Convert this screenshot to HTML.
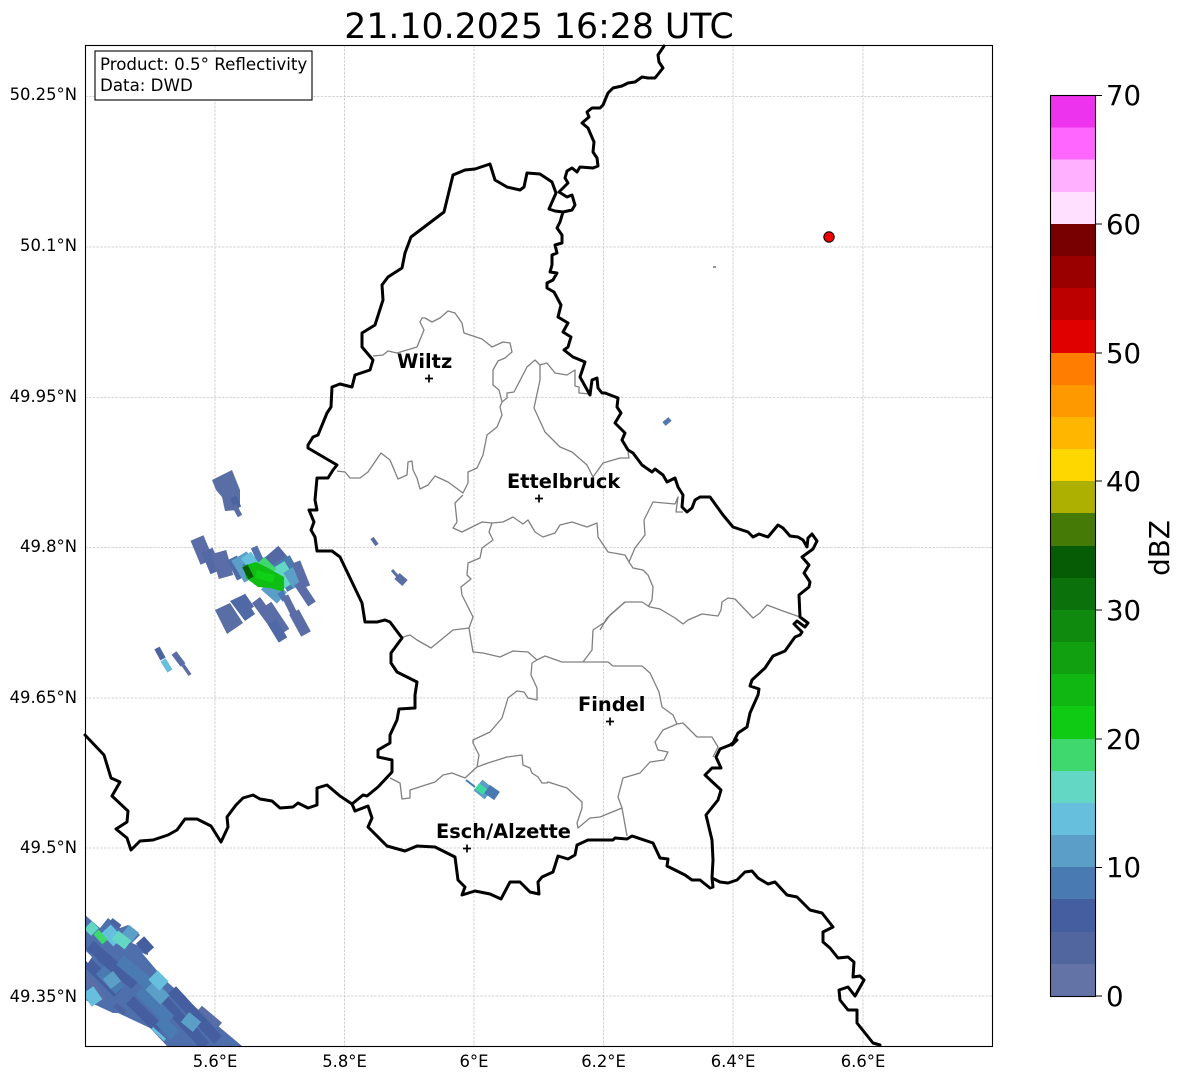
<!DOCTYPE html>
<html><head><meta charset="utf-8"><title>Radar</title>
<style>
html,body{margin:0;padding:0;background:#fff;width:1184px;height:1081px;overflow:hidden}
svg{display:block}
text{font-family:"DejaVu Sans",sans-serif;fill:#000}
.t{font-size:16.4px}
.c{font-size:27.6px}
.b{font-size:19.4px;font-weight:bold}
</style></head><body>
<svg width="1184" height="1081" viewBox="0 0 1184 1081" xmlns="http://www.w3.org/2000/svg">
<defs><clipPath id="f"><rect x="85" y="45" width="907" height="1001"/></clipPath></defs>
<text x="539" y="38" text-anchor="middle" font-size="34.7">21.10.2025 16:28 UTC</text>

<g stroke="#c8c8c8" stroke-width="0.8" stroke-dasharray="2.6 1.2" fill="none">
<path d="M215 45V1046M344.5 45V1046M474 45V1046M603.5 45V1046M733 45V1046M863 45V1046"/>
<path d="M85 96.5H992M85 247H992M85 397.5H992M85 547.5H992M85 698H992M85 848H992M85 996H992"/>
</g>

<!-- radar echoes -->
<g clip-path="url(#f)" fill="none" stroke-linecap="butt">
<!-- top blob -->
<path fill="#5a6ea6" stroke="none" d="M212 480L232 470L240 490L240 503L238 510L225 511L222 497L216 490Z"/>
<path stroke="#4c63a2" stroke-width="7" d="M233 497L238 508"/>
<path stroke="#5a6ea6" stroke-width="5" d="M234 505L240 516"/>
<!-- middle cluster -->
<path stroke="#5b6da6" stroke-width="14" d="M197 538L207 562"/>
<path stroke="#5468a5" stroke-width="12" d="M207 550L216 572"/>
<path stroke="#5b6da6" stroke-width="15" d="M219 552L226 577"/>
<path stroke="#4e6ca8" stroke-width="11" d="M232 558L242 578"/>
<path stroke="#5b9fc8" stroke-width="18" d="M239 556L252 578"/>
<path stroke="#5470ad" stroke-width="7" d="M254 547L262 564"/>
<path stroke="#4a7ab2" stroke-width="18" d="M250 560L262 580"/>
<path stroke="#66c0dd" stroke-width="12" d="M246 555L254 567"/>
<path stroke="#5468a5" stroke-width="22" d="M270 553L288 574"/>
<path stroke="#4a7ab2" stroke-width="20" d="M281 560L296 587"/>
<path stroke="#5b9fc8" stroke-width="15" d="M266 584L282 598"/>
<path stroke="#63d7c4" stroke-width="15" d="M278 565L290 585"/>
<path stroke="#5b9fc8" stroke-width="11" d="M288 570L298 586"/>
<path stroke="#5b6da6" stroke-width="9" d="M296 562L306 587"/>
<path stroke="#5b6da6" stroke-width="9" d="M298 583L312 604"/>
<path stroke="#3ed86e" stroke-width="12" d="M260 561L272 573"/>
<path fill="#0fbe12" stroke="none" d="M243 566L256 562L268 568L284 577L284 592L270 588L258 587L246 578Z"/>
<path stroke="#0fd016" stroke-width="8" d="M256 574L274 579"/>
<path stroke="#056005" stroke-width="6" d="M245 566L251 578"/>
<path stroke="#4a7ab2" stroke-width="6" d="M280 592L285 600"/>
<!-- lower row -->
<path fill="#5a6ea6" stroke="none" d="M215 610L230 603L243 623L227 634Z"/>
<path fill="#4f69a6" stroke="none" d="M230 601L243 595L255 614L245 621Z"/>
<path stroke="#5468a5" stroke-width="5" d="M243 595L252 608"/>
<path stroke="#5b6da6" stroke-width="10" d="M256 600L278 630"/>
<path stroke="#5b6da6" stroke-width="8" d="M268 604L286 631"/>
<path stroke="#4f69a6" stroke-width="10" d="M272 622L283 640"/>
<path stroke="#5b6da6" stroke-width="7" d="M285 596L296 618"/>
<path stroke="#5b6da6" stroke-width="11" d="M294 612L306 634"/>
<!-- left small -->
<path stroke="#4c63a2" stroke-width="6" d="M157 648L163 659"/>
<path stroke="#66c0dd" stroke-width="6" d="M163 660L170 671"/>
<path stroke="#5b6da6" stroke-width="6" d="M174 653L183 665"/>
<path stroke="#5b6da6" stroke-width="3.5" d="M183 665L190 675"/>
<!-- inner small -->
<path stroke="#5b6da6" stroke-width="4" d="M372 538L377 545"/>
<path stroke="#5b6da6" stroke-width="3" d="M392 570L398 577"/>
<path stroke="#5b6da6" stroke-width="8" d="M397 576L405 583"/>
<path stroke="#5b6da6" stroke-width="1.5" d="M713 267H716"/>
<path stroke="#5478ae" stroke-width="5" d="M664 424L670 419"/>
<!-- south small -->
<path stroke="#4a7ab2" stroke-width="2" d="M466 780L475 787"/>
<path stroke="#5b9fc8" stroke-width="14" d="M478 785L489 794"/>
<path stroke="#4a7ab2" stroke-width="10" d="M487 789L497 796"/>
<path stroke="#3ed8a0" stroke-width="7" d="M477 786L485 792"/>
<!-- bottom left -->
<path fill="#4f6fac" stroke="none" d="M85 915L100 928L108 918L120 928L128 925L140 935L132 943L148 950L148 955L142 953L165 980L182 995L202 1013L210 1013L222 1023L217 1025L242 1046L167 1046L150 1028L118 1013L113 1013L100 1007L85 1000Z"/>
<path stroke="#445ea0" stroke-width="11" d="M85 960L118 993M90 945L125 975M100 955L135 985M150 985L195 1035M172 990L218 1040M190 1028L205 1046M130 1000L160 1030M140 940L150 951"/>
<path stroke="#5b6da6" stroke-width="6" d="M85 975L105 1000M200 1008L220 1025"/>
<path stroke="#4a7ab2" stroke-width="12" d="M100 970L120 990M120 960L150 985M140 990L170 1020M160 1020L175 1035"/>
<path stroke="#5b9fc8" stroke-width="13" d="M108 975L116 985M150 985L165 1000M185 1017L197 1027M125 930L135 938"/>
<path stroke="#66c0dd" stroke-width="13" d="M88 990L97 1003M106 929L118 942M153 975L164 986"/>
<path stroke="#63d7c4" stroke-width="11" d="M115 935L128 945M88 925L95 932"/>
<path stroke="#3ed86e" stroke-width="7" d="M96 932L105 942"/>
<path stroke="#4c63a2" stroke-width="5" d="M111 920L120 927M115 1005L125 1013"/>
<path stroke="#66c0dd" stroke-width="3" d="M152 1028L165 1040"/>
<path fill="#fff" stroke="none" d="M85 950L92 957L88 963L85 960Z"/>
</g>

<!-- canton borders -->
<g fill="none" stroke="#808080" stroke-width="1.3" stroke-linejoin="round">
<path d="M373 356L383 355L388 351L397 353L407 350L417 347L424 330L420 322L422 318L425 318L432 322L440 318L448 311L455 313L462 323L464 333L482 339L492 347L503 342L510 343L512 352L505 358L498 361L493 370L493 385L499 390L502 402L500 407L502 415L497 427L487 435L483 455L477 468L468 472L468 483L463 493L448 482L435 476L428 485L420 489L417 478L413 470L412 461L408 462L407 475L398 479L390 460L381 453L368 472L360 478L350 478L345 472L337 471"/>
<path d="M502 402L507 398L507 393L514 392L527 367L535 360L540 365L540 380L534 408L545 432L560 447L572 452L587 465L593 477L603 463L620 458L629 458L628 452"/>
<path d="M540 365L547 363L555 373L567 375L575 370L575 386L579 387L579 393L590 394"/>
<path d="M463 495L455 503L457 522L453 528L462 532L482 522L492 523L503 522L513 517L523 524L528 520L535 532L543 537L555 533L560 525L572 522L587 527L597 523L598 537L608 552L625 555L629 562L635 548L645 535L644 520L653 502L675 504L678 497L676 512L683 512"/>
<path d="M629 562L633 568L643 570L648 575L653 587L652 600L648 607"/>
<path d="M600 630L607 618L625 602L642 602L650 607L660 609L675 618L683 624L688 620L702 614L718 616L721 610L722 602L728 598L735 599L753 618L760 613L767 605L783 611L800 617"/>
<path d="M492 523L489 532L493 540L482 548L480 558L468 563L467 575L471 579L461 587L462 595L473 617L469 628L473 652L483 653L500 657L513 651L528 652L537 660L532 663L531 675L537 688L537 700L528 698L524 692L517 691L508 698L502 718L490 732L473 740L473 743L479 755L477 767L465 778L452 773L443 775L435 782L410 790L410 798L402 799L400 783L390 778"/>
<path d="M469 628L453 630L431 648L417 640L410 635L403 637"/>
<path d="M537 660L545 656L562 662L583 662L592 662L602 662L608 662L613 666L642 666L650 673L659 692L662 707L673 715L677 724L683 723L697 737L712 737L718 747L713 757"/>
<path d="M583 662L592 650L593 630L605 622L610 615L625 602"/>
<path d="M677 724L663 730L655 742L658 750L668 752L664 760L650 762L640 773L623 778L618 797L622 808L627 836"/>
<path d="M477 767L488 763L507 757L522 755L523 765L530 768L532 773L538 777L542 783L547 783L548 782L567 788L582 802L582 808L577 823L578 828L590 818L600 817L622 808"/>
</g>

<!-- country borders -->
<g fill="none" stroke="#000" stroke-width="3" stroke-linejoin="round" stroke-linecap="round">
<path d="M664 46L658 55L659 62L663 68L655 78L648 78L642 77L635 82L628 83L622 86L613 88L608 93L603 105L600 108L592 108L587 112L589 117L582 123L588 128L594 142L593 152L597 158L598 166L593 168L580 167L577 172L572 168L567 171L565 178L568 183L563 188L559 192L567 197L572 195L575 205L572 210L563 212L555 211L549 209L556 193L552 182L540 174L527 173L524 187L520 190L507 187L495 180L490 164L475 169L465 170L453 175L444 212L411 237L405 253L402 268L388 277L382 285L383 300L375 325L362 333L362 347L373 360L370 370L355 375L352 387L340 384L332 387L331 407L327 413L318 435L313 437L308 445L308 448L337 465L333 470L328 478L317 478L315 500L317 510L309 510L314 522L311 530L315 537L317 551L332 551L340 557L362 603L365 622L377 622L385 620L390 622L402 638L391 653L391 663L397 672L417 682L415 695L415 708L399 709L397 720L390 735L390 743L378 750L378 757L392 760L392 772L378 787L367 796L363 795L352 804L355 811L368 806L372 818L368 827L387 846L405 851L417 846L435 847L455 857L458 880L465 887L462 895L475 891L490 894L501 899L510 882L520 882L530 892L539 894L538 882L542 877L553 872L558 856L568 859L575 855L577 845L588 840L613 840L615 838L627 839L632 836L653 843L660 858L668 859L667 866L685 875L692 880L700 880L710 888L713 887L712 878L713 860L712 840L706 815L718 800L721 790L705 775L712 768L721 768L716 757L720 749L730 745L737 740L732 745L738 733L747 727L750 713L758 695L759 689L750 686L752 680L765 668L773 656L785 651L795 637L800 635L802 632L794 624L797 621L805 627L808 623L800 617L799 595L809 587L810 582L804 573L809 565L802 557L813 549L817 541L812 534L808 538L807 547L803 540L798 537L790 536L783 528L778 525L768 537L759 534L753 537L748 532L733 527L723 515L710 497L700 497L695 500L692 508L687 512L682 507L683 495L678 487L675 478L667 482L663 475L655 469L652 472L642 465L633 453L628 450L622 440L625 433L615 423L621 413L617 407L618 398L605 393L602 393L598 388L597 378L592 380L590 395L580 377L585 362L573 357L564 350L568 347L571 337L563 332L568 323L558 317L561 305L554 292L547 288L547 283L553 280L557 273L550 272L552 265L552 255L557 253L555 245L562 243L562 235L557 228L560 222L563 212"/>
<path d="M85 735L104 755L111 778L120 782L112 796L128 811L127 822L116 829L127 838L131 850L140 841L153 840L168 835L177 830L185 819L197 819L211 826L221 842L228 827L227 817L236 805L243 798L253 795L260 799L272 801L280 808L293 807L298 803L308 808L317 805L317 788L327 785L340 796L352 804"/>
<path d="M712 878L720 882L728 883L737 880L745 872L752 871L758 878L768 884L775 882L787 895L797 897L810 910L822 913L833 927L823 932L823 942L830 948L838 958L848 957L854 962L853 977L860 976L864 980L855 996L848 987L839 990L840 1000L848 1010L857 1010L857 1023L873 1043L880 1045"/>
</g>

<!-- stations -->
<g stroke="#000" stroke-width="1.7" fill="none">
<path d="M425 378.5H433M429 374.5V382.5M535 498.5H543M539 494.5V502.5M606 721.5H614M610 717.5V725.5M463 848.5H471M467 844.5V852.5"/>
</g>
<text class="b" x="397" y="368">Wiltz</text>
<text class="b" x="507" y="488">Ettelbruck</text>
<text class="b" x="578" y="711">Findel</text>
<text class="b" x="436" y="838">Esch/Alzette</text>
<circle cx="829" cy="237" r="5.2" fill="#ee0000" stroke="#000" stroke-width="1"/>

<rect x="85.5" y="45.5" width="907" height="1001" fill="none" stroke="#000" stroke-width="1.1"/>

<rect x="95" y="51" width="217" height="49" fill="#fff" stroke="#000" stroke-width="1.1"/>
<text class="t" x="100" y="70" style="font-size:16.67px">Product: 0.5° Reflectivity</text>
<text class="t" x="100" y="91" style="font-size:16.67px">Data: DWD</text>

<g class="t" text-anchor="end">
<text class="t" x="77" y="100">50.25°N</text>
<text class="t" x="77" y="251">50.1°N</text>
<text class="t" x="77" y="402">49.95°N</text>
<text class="t" x="77" y="552">49.8°N</text>
<text class="t" x="77" y="703">49.65°N</text>
<text class="t" x="77" y="853">49.5°N</text>
<text class="t" x="77" y="1002">49.35°N</text>
</g>
<g text-anchor="middle">
<text class="t" x="215" y="1067">5.6°E</text>
<text class="t" x="344.5" y="1067">5.8°E</text>
<text class="t" x="474" y="1067">6°E</text>
<text class="t" x="603.5" y="1067">6.2°E</text>
<text class="t" x="733" y="1067">6.4°E</text>
<text class="t" x="863" y="1067">6.6°E</text>
</g>

<!-- colorbar -->
<g shape-rendering="crispEdges">
<rect x="1050" y="95.5" width="45" height="32.2" fill="#ee33ee"/>
<rect x="1050" y="127.5" width="45" height="32.4" fill="#ff66ff"/>
<rect x="1050" y="159.5" width="45" height="32.6" fill="#ffb0ff"/>
<rect x="1050" y="192" width="45" height="32.4" fill="#ffe0ff"/>
<rect x="1050" y="224" width="45" height="32.4" fill="#780000"/>
<rect x="1050" y="256" width="45" height="32.4" fill="#9a0000"/>
<rect x="1050" y="288" width="45" height="32.4" fill="#bc0000"/>
<rect x="1050" y="320" width="45" height="33.4" fill="#e00000"/>
<rect x="1050" y="353" width="45" height="32.4" fill="#ff7d00"/>
<rect x="1050" y="385" width="45" height="32.4" fill="#ff9900"/>
<rect x="1050" y="417" width="45" height="32.4" fill="#ffb600"/>
<rect x="1050" y="449" width="45" height="32.4" fill="#ffd700"/>
<rect x="1050" y="481" width="45" height="32.4" fill="#adb000"/>
<rect x="1050" y="513" width="45" height="33.4" fill="#467a07"/>
<rect x="1050" y="546" width="45" height="32.4" fill="#055c05"/>
<rect x="1050" y="578" width="45" height="32.4" fill="#0b720b"/>
<rect x="1050" y="610" width="45" height="32.4" fill="#0f8a0f"/>
<rect x="1050" y="642" width="45" height="32.4" fill="#10a010"/>
<rect x="1050" y="674" width="45" height="32.4" fill="#10b612"/>
<rect x="1050" y="706" width="45" height="33.4" fill="#0fcb14"/>
<rect x="1050" y="739" width="45" height="32.4" fill="#3ed86e"/>
<rect x="1050" y="771" width="45" height="32.4" fill="#63d7c4"/>
<rect x="1050" y="803" width="45" height="32.4" fill="#66c0dd"/>
<rect x="1050" y="835" width="45" height="32.4" fill="#5b9fc8"/>
<rect x="1050" y="867" width="45" height="32.4" fill="#4a7ab2"/>
<rect x="1050" y="899" width="45" height="33.4" fill="#445ea0"/>
<rect x="1050" y="932" width="45" height="32.4" fill="#51659f"/>
<rect x="1050" y="964" width="45" height="32.4" fill="#6373a6"/>
</g>
<rect x="1050.5" y="95.5" width="45" height="901" fill="none" stroke="#000" stroke-width="1.1"/>
<path stroke="#000" stroke-width="1.1" d="M1095 95.5H1102M1095 224H1102M1095 353H1102M1095 481H1102M1095 610H1102M1095 739H1102M1095 867.5H1102M1095 996H1102"/>
<text class="c" x="1106" y="105">70</text>
<text class="c" x="1106" y="234">60</text>
<text class="c" x="1106" y="363">50</text>
<text class="c" x="1106" y="491">40</text>
<text class="c" x="1106" y="620">30</text>
<text class="c" x="1106" y="749">20</text>
<text class="c" x="1106" y="877">10</text>
<text class="c" x="1106" y="1006">0</text>
<text transform="translate(1169 548) rotate(-90)" text-anchor="middle" font-size="27.8">dBZ</text>
</svg>
</body></html>
